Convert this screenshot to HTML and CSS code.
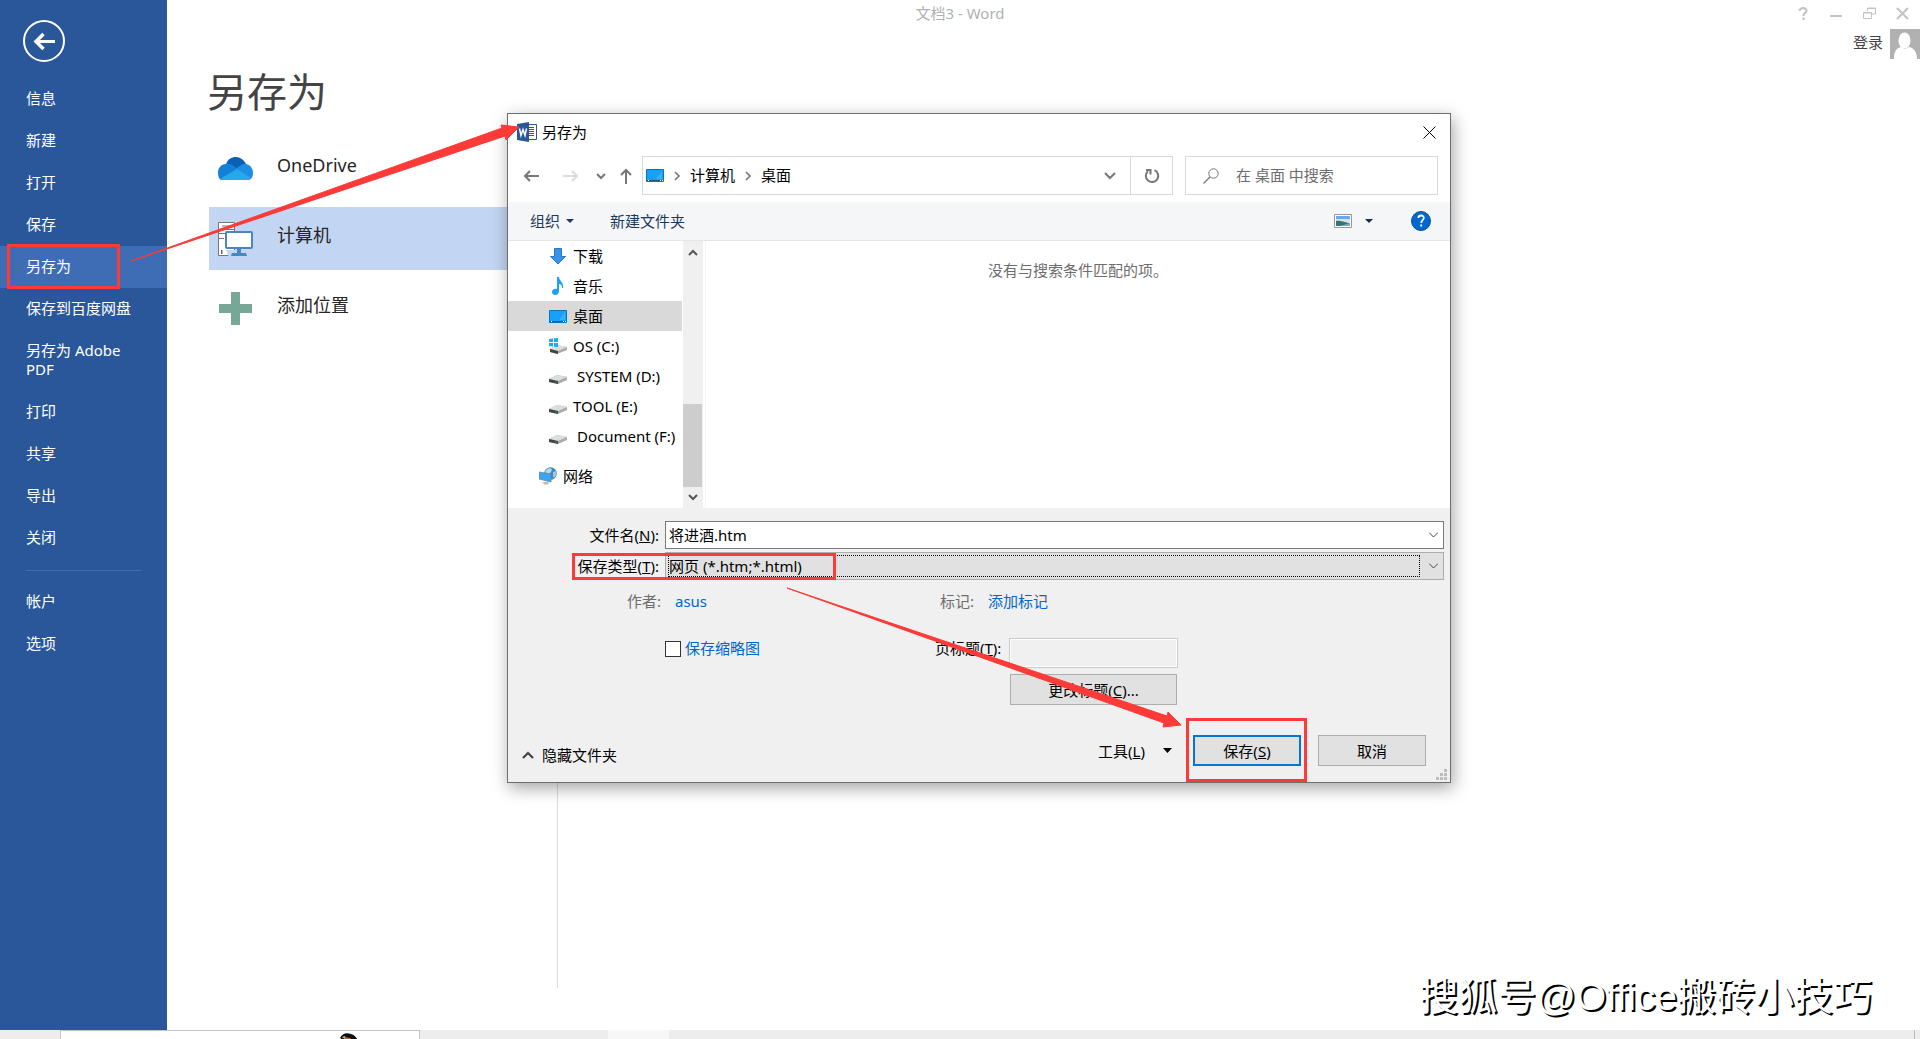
FILE: index.html
```html
<!DOCTYPE html>
<html lang="zh-CN">
<head>
<meta charset="utf-8">
<title>文档3 - Word</title>
<link rel="stylesheet" href="styles.css">
</head>
<body>
<div class="backstage">
  <nav class="sidebar">
    <button class="back" aria-label="返回">
      <svg width="42" height="42" viewBox="0 0 42 42" fill="none" stroke="#fff"><circle cx="21" cy="21" r="20" stroke-width="2"/><path d="M32 21.500H13" stroke-width="3"/><path d="M20.500 14L13 21.500L20.500 29" stroke-width="3.500"/></svg>
    </button>
    <a class="nav-item" href="#">信息</a>
    <a class="nav-item" href="#">新建</a>
    <a class="nav-item" href="#">打开</a>
    <a class="nav-item" href="#">保存</a>
    <a class="nav-item active" href="#">另存为</a>
    <a class="nav-item" href="#">保存到百度网盘</a>
    <a class="nav-item" href="#">另存为 Adobe PDF</a>
    <a class="nav-item" href="#">打印</a>
    <a class="nav-item" href="#">共享</a>
    <a class="nav-item" href="#">导出</a>
    <a class="nav-item" href="#">关闭</a>
    <hr class="nav-rule">
    <a class="nav-item" href="#">帐户</a>
    <a class="nav-item" href="#">选项</a>
  </nav>

  <main class="page">
    <h1>另存为</h1>
    <div class="places">
      <button class="place">
        <svg width="36" height="36" viewBox="0 0 36 36"><path d="M9 14C10 8 15 6 19 6s8 3 10 7l-8 7z" fill="#0a5fb8"/><path d="M1 22c0-5 3-9 8-9 4-1 7 1 9 3l7 5-21 8c-2-1-3-4-3-7z" fill="#1380d8"/><path d="M18 18l8-5c5-1 10 3 10 9 0 4-2 7-5 7l-13-4z" fill="#1a8fe3"/><path d="M3 28l17-10 14 9c-1 1-3 2-5 2H8c-2 0-4 0-5-1z" fill="#28a8ea"/></svg>
        <span>OneDrive</span>
      </button>
      <button class="place selected">
        <svg width="36" height="36" viewBox="0 0 36 36"><path d="M1.500 1.500h16v33h-16z" fill="#fff" stroke="#777"/><path d="M5 5h9M2 8.500h15M2 12.500h15M2 17.500h5" stroke="#777"/><path d="M4 29h1.500v4H4z" fill="#666"/><path d="M9 29h11v7H12z" fill="#c2d5f2"/><rect x="9" y="11" width="26" height="16" rx="1" fill="#fff" stroke="#4a86bf" stroke-width="2"/><path d="M20 28h4v4h5l1 3H14l1-3h5z" fill="#4a86bf"/></svg>
        <span>计算机</span>
      </button>
      <button class="place">
        <svg width="36" height="36" viewBox="0 0 36 36"><path d="M14 1h9v12h12v9H23v12h-9V22H2v-9h12z" fill="#77a797"/></svg>
        <span>添加位置</span>
      </button>
    </div>
  </main>

  <header class="titlebar">文档3 - Word</header>
  <div class="window-tools">
    <button aria-label="帮助"><svg width="13" height="13" viewBox="0 0 13 13" fill="none" stroke="#c3c3c3" stroke-width="2.200"><path d="M2.500 4C2.500 0 10 .5 9.500 4 9.200 6 6.500 6 6.500 9M6.500 10.500V13"/></svg></button>
    <button aria-label="最小化"><svg width="13" height="13" viewBox="0 0 13 13"><path d="M0 8h12v2H0z" fill="#c3c3c3"/></svg></button>
    <button aria-label="还原"><svg width="13" height="13" viewBox="0 0 13 13" fill="none" stroke="#c3c3c3"><path d="M4.500 4V1h8v6H9M4 1.500h8M.5 5.500h8v6h-8zM1 6h7"/></svg></button>
    <button aria-label="关闭"><svg width="13" height="13" viewBox="0 0 13 13" stroke="#c3c3c3" stroke-width="2"><path d="M1 1l11 11M12 1L1 12"/></svg></button>
  </div>
  <div class="account">
    <a href="#">登录</a>
    <svg width="30" height="30" viewBox="0 0 30 30"><path d="M0 0h30v30H0z" fill="#b1b1b1"/><ellipse cx="14.500" cy="11.500" rx="6" ry="8" fill="#fff"/><path d="M4 30c0-7 2-11 7-12l4 2 4-2c5 1 8 5 8 12z" fill="#fff"/></svg>
  </div>
</div>

<footer class="taskbar">
  <div class="task-search"><svg width="20" height="8" viewBox="0 0 20 8"><path d="M1 5C3 1 7-1 12 1c4 1 6 4 7 7H6z" fill="#111"/><path d="M6 4l5 1 4 3H5z" fill="#b06a2c"/><path d="M3 4l3-1v3z" fill="#cbb"/></svg></div>
  <div class="task-active"></div>
  <div class="task-clock">20:40</div>
</footer>

<section class="dialog" role="dialog" aria-label="另存为">
  <header class="dialog-title">
    <svg width="20" height="20" viewBox="0 0 20 20"><path d="M10 2.500h9.500v15H10z" fill="#fff" stroke="#2b579a"/><path d="M12 5.500h5M12 7.500h5M12 9.500h5M12 11.500h5M12 13.500h5" stroke="#2b579a"/><path d="M0 2l12-2v20L0 18z" fill="#2b579a"/><path d="M2.500 6.500l1.500 7 2-6 2 6 1.500-7" fill="none" stroke="#fff" stroke-width="1.500"/></svg>
    <span>另存为</span>
    <button class="close" aria-label="关闭"><svg width="13" height="13" viewBox="0 0 13 13" stroke="#000"><path d="M.5.5l12 12M12.500.5l-12 12"/></svg></button>
  </header>

  <div class="nav-row">
    <div class="nav-buttons">
      <button aria-label="后退"><svg width="16" height="16" viewBox="0 0 16 16" fill="none" stroke="#777" stroke-width="2"><path d="M15 8H1M6 3L1 8l5 5"/></svg></button>
      <button aria-label="前进"><svg width="16" height="16" viewBox="0 0 16 16" fill="none" stroke="#ddd" stroke-width="2"><path d="M0 8h14M9 3l5 5-5 5"/></svg></button>
      <button aria-label="最近位置"><svg width="10" height="16" viewBox="0 0 10 16" fill="none" stroke="#777" stroke-width="2"><path d="M1 6l4 4 4-4"/></svg></button>
      <button aria-label="上移"><svg width="14" height="16" viewBox="0 0 14 16" fill="none" stroke="#777" stroke-width="2"><path d="M7 16V2M2 7l5-5 5 5"/></svg></button>
    </div>
    <div class="address">
      <svg width="18" height="13" viewBox="0 0 18 13"><path d="M.5.5h17v12H.5z" fill="#18a0fb" stroke="#0a73bd"/><path d="M10 10l6-8v8z" fill="#38b0ff"/><path d="M1 11.500h16" stroke="#0b5c96"/><path d="M2 11.500h1M14 11.500h1M16 11.500h1" stroke="#fff"/></svg>
      <svg class="crumb-sep" width="7" height="10" viewBox="0 0 7 10" fill="none" stroke="#777" stroke-width="1.700"><path d="M1 1l4 4-4 4"/></svg>
      <a href="#">计算机</a>
      <svg class="crumb-sep" width="7" height="10" viewBox="0 0 7 10" fill="none" stroke="#777" stroke-width="1.700"><path d="M1 1l4 4-4 4"/></svg>
      <a href="#">桌面</a>
      <button class="address-drop" aria-label="历史"><svg width="12" height="8" viewBox="0 0 12 8" fill="none" stroke="#777" stroke-width="2"><path d="M1 1l5 5 5-5"/></svg></button>
      <button class="refresh" aria-label="刷新"><svg width="16" height="16" viewBox="0 0 16 16" fill="none" stroke="#777" stroke-width="2"><path d="M10.500 2.200A6.200 6.200 0 1 1 4 3.200M2 2h4.500v4.500"/></svg></button>
    </div>
    <label class="search">
      <svg width="16" height="16" viewBox="0 0 16 16" fill="none" stroke="#777"><circle cx="10.500" cy="5.500" r="4.700"/><path d="M7 9L.5 15.500" stroke-width="1.300"/></svg>
      <input type="text" placeholder="在 桌面 中搜索" aria-label="搜索">
    </label>
  </div>

  <div class="toolbar">
    <button>组织<svg width="8" height="4" viewBox="0 0 8 4"><path d="M0 0h8L4 4z" fill="#1b3a63"/></svg></button>
    <button>新建文件夹</button>
    <button class="view" aria-label="视图"><svg width="18" height="14" viewBox="0 0 18 14"><path d="M.5.5h17v13H.5z" fill="#fff" stroke="#999"/><path d="M2 2h14v5H2z" fill="#6da6f2"/><path d="M2 5h14v3H2z" fill="#cfe3fa"/><path d="M2 7c4-1 7 1 14 2v3H2z" fill="#39746b"/><path d="M6 12l10-3v3z" fill="#7fa9cc"/></svg><svg width="8" height="4" viewBox="0 0 8 4"><path d="M0 0h8L4 4z" fill="#1b2a4d"/></svg></button>
    <button class="help" aria-label="帮助"><svg width="20" height="20" viewBox="0 0 20 20"><circle cx="10" cy="10" r="9.500" fill="#0068cf" stroke="#124f8c"/><path d="M7.300 7C7.500 3.500 13 3.800 12.800 7 12.600 9 10.200 9.300 10.200 12M10.200 13.500v2" fill="none" stroke="#fff" stroke-width="1.800"/></svg></button>
  </div>

  <div class="browser">
    <ul class="tree">
      <li><svg width="18" height="18" viewBox="0 0 18 18"><path d="M5.500 1.500h7v8h4L9 17 1.500 9.500h4z" fill="#3a94e6" stroke="#2478c4"/></svg>下载</li>
      <li><svg width="18" height="18" viewBox="0 0 18 18"><path d="M8 0h2c0 4 5 5 4 11h-1c0-3-1-4-3-4v7c0 5-7 5-7 1 0-2 2-4 5-3z" fill="#18a0fb"/></svg>音乐</li>
      <li class="current"><svg width="18" height="13" viewBox="0 0 18 13"><path d="M.5.5h17v12H.5z" fill="#18a0fb" stroke="#0a73bd"/><path d="M10 10l6-8v8z" fill="#38b0ff"/><path d="M1 11.500h16" stroke="#0b5c96"/><path d="M2 11.500h1M14 11.500h1M16 11.500h1" stroke="#fff"/></svg>桌面</li>
      <li><svg width="18" height="18" viewBox="0 0 18 18"><path d="M1 12l7-4 10 2v3l-10 4-7-2z" fill="#aaa"/><path d="M1 12l7-4 10 2-9 4z" fill="#ddd"/><path d="M1 12l8 2v3l-8-2z" fill="#444"/><path d="M0 2l4-.5V5H0zM5 1.200L9 1v4H5zM0 6h4v3.500L0 9zM5 6h4v4l-4-.3z" fill="#10b4f0"/></svg>OS (C:)</li>
      <li class="indent"><svg width="18" height="18" viewBox="0 0 18 18"><path d="M0 12l8-4 10 2v3l-9 4-9-2z" fill="#aaa"/><path d="M0 12l8-4 10 2-9 4z" fill="#ddd"/><path d="M0 12l9 2v3l-9-2z" fill="#444"/><path d="M6 15h1.500" stroke="#2da84a"/></svg>SYSTEM (D:)</li>
      <li><svg width="18" height="18" viewBox="0 0 18 18"><path d="M0 12l8-4 10 2v3l-9 4-9-2z" fill="#aaa"/><path d="M0 12l8-4 10 2-9 4z" fill="#ddd"/><path d="M0 12l9 2v3l-9-2z" fill="#444"/><path d="M6 15h1.500" stroke="#2da84a"/></svg>TOOL (E:)</li>
      <li class="indent"><svg width="18" height="18" viewBox="0 0 18 18"><path d="M0 12l8-4 10 2v3l-9 4-9-2z" fill="#aaa"/><path d="M0 12l8-4 10 2-9 4z" fill="#ddd"/><path d="M0 12l9 2v3l-9-2z" fill="#444"/><path d="M6 15h1.500" stroke="#2da84a"/></svg>Document (F:)</li>
      <li class="network"><svg width="18" height="18" viewBox="0 0 18 18"><circle cx="11.500" cy="6.500" r="6.300" fill="#4088bd"/><path d="M8 2c4-2 6 0 4 3S8 7 6 5z" fill="#b8d8e8"/><path d="M14 5l3-1v5l-3 2z" fill="#9cc8e0"/><path d="M0 5l12 2v8L0 12z" fill="#38a5f5" stroke="#6b87a0" stroke-width=".8"/><path d="M3 15.500l6-1 1 2.500-4 .8z" fill="#bbb"/></svg>网络</li>
    </ul>
    <div class="scrollbar">
      <svg width="10" height="7" viewBox="0 0 10 7" fill="none" stroke="#555" stroke-width="2"><path d="M1 6l4-4 4 4"/></svg>
      <div class="thumb"></div>
      <svg width="10" height="7" viewBox="0 0 10 7" fill="none" stroke="#555" stroke-width="2"><path d="M1 1l4 4 4-4"/></svg>
    </div>
    <div class="files">没有与搜索条件匹配的项。</div>
  </div>

  <form class="form">
    <div class="field">
      <label for="fname">文件名(<u>N</u>):</label>
      <div class="control name-box">
        <input id="fname" type="text" value="将进酒.htm">
        <svg width="9" height="6" viewBox="0 0 9 6" fill="none" stroke="#444"><path d="M0 .5l4.500 4.500L9 .5"/></svg>
      </div>
    </div>
    <div class="field">
      <label for="ftype">保存类型(<u>T</u>):</label>
      <div class="control type-box">
        <select id="ftype"><option>网页 (*.htm;*.html)</option></select>
        <svg width="9" height="6" viewBox="0 0 9 6" fill="none" stroke="#444"><path d="M0 .5l4.500 4.500L9 .5"/></svg>
      </div>
    </div>
    <div class="meta">
      <span class="meta-label author">作者:</span><a class="author-value" href="#">asus</a>
      <span class="meta-label">标记:</span><a href="#">添加标记</a>
    </div>
    <div class="options">
      <label class="thumbnail"><input type="checkbox">保存缩略图</label>
      <label class="page-title" for="ptitle">页标题(<u>T</u>):</label>
      <div class="title-controls">
        <input id="ptitle" type="text" disabled>
        <button type="button" class="btn">更改标题(<u>C</u>)...</button>
      </div>
    </div>
    <div class="actions">
      <button type="button" class="hide-folders"><svg width="12" height="8" viewBox="0 0 12 8" fill="none" stroke="#444" stroke-width="2.200"><path d="M1 7l5-5 5 5"/></svg>隐藏文件夹</button>
      <button type="button" class="tools">工具(<u>L</u>)<svg width="9" height="5" viewBox="0 0 9 5"><path d="M0 0h9L4.500 5z"/></svg></button>
      <button type="button" class="btn primary">保存(<u>S</u>)</button>
      <button type="button" class="btn">取消</button>
    </div>
    <svg class="grip" width="12" height="12" viewBox="0 0 12 12" fill="#bdbdbd"><path d="M8 0h3v3H8zM4 4h3v3H4zM8 4h3v3H8zM0 8h3v3H0zM4 8h3v3H4zM8 8h3v3H8z"/></svg>
  </form>
</section>

<svg class="marks" width="1400" height="800" viewBox="0 0 1400 800" fill="none" stroke="#fc3a38" stroke-width="3">
  <path d="M8.500 245.500h110v42H8.500zM573.500 554.500h261v24h-261zM1187.500 719.500h118v61h-118z"/>
  <path d="M131 261L502 128L501 125L519 127L506 140L505 136ZM787 588L1167 716L1168 712L1181 725L1163 727L1164 723Z" fill="#fc3a38" stroke-width="1"/>
</svg>
<div class="watermark">搜狐号@Office搬砖小技巧</div>
</body>
</html>
```
FILE: styles.css
```css
* { box-sizing: border-box; }
body {
  margin: 0;
  min-height: 100vh;
  display: flex;
  flex-direction: column;
  position: relative;
  overflow-x: hidden;
  background: #fff;
  color: #000;
  font: 15px/20px "Noto Sans", "Noto Sans CJK SC", sans-serif;
}
button {
  margin: 0; padding: 0; border: 0; background: none;
  color: inherit; font: inherit; text-align: left;
}
input, select { font: inherit; color: inherit; }
a { color: inherit; text-decoration: none; }
svg { display: block; flex: none; }

.backstage { flex: 1; display: flex; position: relative; }

/* Sidebar */
.sidebar { width: 167px; background: #2a579a; color: #fff; display: flex; flex-direction: column; }
.back { margin: 20px 0 16px 23px; width: 42px; }
.nav-item { padding: 11px 26px 12px; line-height: 19px; }
.nav-item.active { background: #3e6db5; }
.nav-rule { margin: 11px 26px 10px; width: 115px; border: 0; border-top: 1px solid #3e6db5; }

/* Save-as page */
.page { flex: 1; padding: 62px 0 42px 40px; display: flex; flex-direction: column; }
h1 { margin: 0 0 15px; font-size: 40px; line-height: 60px; font-weight: 400; color: #444; }
.places {
  flex: 1; width: 351px; border-right: 1px solid #dcdcdc;
  display: flex; flex-direction: column; gap: 7px;
}
.place {
  height: 63px; margin-left: 2px; padding: 0 8px; display: flex; align-items: center; gap: 24px;
  font-size: 18px; line-height: 24px; color: #262626;
}
.place span { padding-bottom: 7px; }
.place.selected { background: #c2d5f2; }

.titlebar { position: absolute; left: 0; right: 0; top: 3px; text-align: center; color: #b1b1b1; pointer-events: none; }
.window-tools { position: absolute; right: 11px; top: 7px; display: flex; gap: 20px; }
.account { position: absolute; right: 0; top: 29px; display: flex; align-items: center; gap: 7px; color: #444; }
.account a { padding-bottom: 4px; }

/* Taskbar */
.taskbar { height: 9px; background: #ededed; display: flex; overflow: hidden; }
.task-search { width: 360px; margin-left: 60px; border: 1px solid #c4c4c4; border-bottom: 0; background: #fff; padding: 2px 0 0 278px; }
.task-active { width: 61px; margin-left: 188px; background: #f7f7f7; }
.task-clock { margin-left: auto; padding: 3px 86px 0 0; margin-right: 5px; border-right: 1px solid #bbb; line-height: 20px; }

/* Save dialog */
.dialog {
  position: absolute; left: 507px; top: 113px; width: 944px;
  border: 1px solid #6e6e6e; background: #fff;
  box-shadow: 2px 5px 16px rgba(0, 0, 0, .36);
}
.dialog-title { height: 38px; padding: 0 14px 2px 9px; display: flex; align-items: center; gap: 5px; }
.close { margin-left: auto; }

.nav-row { display: flex; height: 50px; padding: 4px 12px 7px 16px; align-items: stretch; }
.nav-buttons { width: 118px; display: flex; align-items: center; gap: 23px; }
.nav-buttons button:nth-child(3) { margin-left: -6px; }
.nav-buttons button:nth-child(4) { margin-left: -10px; }
.address { flex: 1; display: flex; align-items: center; border: 1px solid #d9d9d9; padding-left: 3px; }
.address a { padding-bottom: 2px; }
.crumb-sep { margin: 0 9px 0 10px; }
.address-drop { margin-left: auto; margin-right: 14px; }
.refresh { align-self: stretch; width: 42px; border-left: 1px solid #d9d9d9; display: flex; align-items: center; justify-content: center; }
.search { width: 253px; margin-left: 12px; border: 1px solid #d9d9d9; display: flex; align-items: center; gap: 17px; padding-left: 17px; }
.search input { border: 0; padding: 0 0 2px; width: 180px; height: 24px; background: none; }
.search input::placeholder { color: #6d6d6d; opacity: 1; }

.toolbar { height: 39px; padding: 0 19px 0 22px; display: flex; align-items: center; gap: 36px; background: #f4f6f8; border-bottom: 1px solid #e5e5e5; color: #1e395b; }
.toolbar button { display: flex; align-items: center; gap: 6px; }
.toolbar .view { margin-left: auto; margin-right: 2px; gap: 13px; }

.browser { display: flex; height: 267px; }
.tree { list-style: none; margin: 0; padding: 0; width: 174px; white-space: nowrap; }
.tree li { height: 30px; padding-left: 41px; display: flex; align-items: center; gap: 6px; }
.tree li.indent { gap: 10px; }
.tree li.current { background: #d9d9d9; }
.tree li.network { margin-top: 10px; padding-left: 31px; }
.scrollbar { width: 20px; margin-left: 1px; padding: 8px 1px 7px 0; background: #f0f0f0; display: flex; flex-direction: column; align-items: center; }
.scrollbar .thumb { width: 100%; height: 83px; margin: auto 0 7px; background: #cdcdcd; }
.files { flex: 1; margin-left: 2px; padding: 19px 0 0; border-left: 1px solid #f5f5f5; text-align: center; color: #6d6d6d; }

.form { position: relative; background: #f0f0f0; padding: 13px 0 16px; }
.field { display: flex; align-items: center; margin-bottom: 3px; padding-right: 6px; }
.field label { width: 157px; padding-right: 6px; text-align: right; }
.control { flex: 1; height: 28px; display: flex; align-items: center; justify-content: space-between; padding-right: 5px; border: 1px solid #7a7a7a; background: #fff; }
.control input { flex: 1; border: 0; padding: 0 3px 2px; height: 24px; background: none; outline: 0; }
.type-box { border-color: #adadad; background: #e1e1e1; padding-left: 2px; }
.control select { flex: 1; appearance: none; height: 22px; line-height: 20px; padding: 0; border: 1px dotted #000; border-radius: 0; margin-right: 9px; background: none; }
.meta { display: flex; margin-top: 11px; }
.meta a, .thumbnail { color: #0066cc; }
.meta-label { color: #6d6d6d; margin-right: 14px; }
.meta-label.author { width: 153px; text-align: right; }
.author-value { width: 265px; }
.options { display: flex; align-items: flex-start; margin-top: 27px; padding-left: 157px; }
.thumbnail { width: 270px; display: flex; align-items: center; gap: 4px; }
.thumbnail input { appearance: none; margin: 2px 0 0; width: 16px; height: 16px; border: 1px solid #333; background: #fff; }
.page-title { width: 74px; }
.title-controls { display: flex; flex-direction: column; align-items: center; gap: 6px; width: 169px; }
.title-controls input { width: 169px; height: 30px; border: 1px solid #ccc; background: #f0f0f0; box-shadow: inset 0 0 0 1px #fff; }
.btn { width: 108px; height: 31px; border: 1px solid #adadad; background: #e1e1e1; text-align: center; }
.title-controls .btn { width: 167px; }
.btn.primary { border: 2px solid #0078d7; margin: 0 17px 0 21px; }
.actions { display: flex; align-items: center; margin-top: 30px; padding: 0 24px 0 14px; }
.hide-folders { display: flex; align-items: center; gap: 8px; padding-top: 9px; }
.tools { display: flex; align-items: center; margin-left: auto; }
.tools svg { margin-left: 18px; }
.grip { position: absolute; right: 2px; bottom: 1px; }

/* Callouts drawn over the window */
.marks { position: absolute; left: 0; top: 0; pointer-events: none; }
.watermark {
  position: absolute; right: 48px; bottom: 17px;
  font: 39px/50px "Liberation Sans", "Noto Sans CJK SC", sans-serif;
  color: #fff; text-shadow: 2px 2px 0 #000; white-space: nowrap;
}
```
